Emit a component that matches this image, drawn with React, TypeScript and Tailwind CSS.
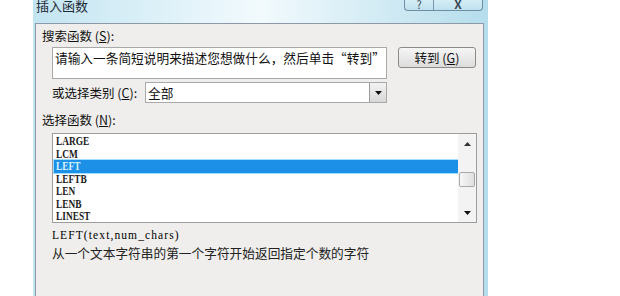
const items = ['LARGE', 'LCM', 'LEFT', 'LEFTB', 'LEN', 'LENB', 'LINEST']

function DownTri({ className = '' }: { className?: string }) {
    return (
        <svg width="7" height="4" viewBox="0 0 7 4" className={className}>
            <path d="M0 0 L7 0 L3.5 4 Z" fill="#111" />
        </svg>
    )
}

function UpTri() {
    return (
        <svg width="7" height="4" viewBox="0 0 7 4">
            <path d="M0 4 L7 4 L3.5 0 Z" fill="#333" />
        </svg>
    )
}

export default function App() {
    const cjk = { fontFamily: '"Noto Sans CJK SC", "Noto Sans", sans-serif' }
    const serif = { fontFamily: '"Liberation Serif", "DejaVu Serif", serif' }

    return (
        <div className="w-[620px] h-[296px] bg-white flex overflow-hidden" style={cjk}>
            <div className="ml-[33px] w-[455px] h-[296px] flex flex-col bg-linear-to-r from-[#c3e5f2] via-[#f2fafd] to-[#b5ddec] pl-[2px] pr-[4px]">
                {/* title bar */}
                <div className="h-[23px] flex items-start justify-between">
                    <span className="text-[13px] leading-[13px] mt-[-1px] ml-[1px] text-[#1e2a33]">插入函数</span>
                    <div className="flex h-[12px] mt-[-1px] mr-[1px] border border-t-0 border-[#6f8ea3] rounded-b-[4px] bg-linear-to-b from-[#d6eef8] to-[#bfe1ee] overflow-hidden">
                        <div className="w-[29px] flex justify-center items-end text-[11px] leading-[11px] text-[#3a4a55] border-r border-[#7c97aa]">?</div>
                        <div className="w-[48px] flex justify-center items-end text-[12px] leading-[12px] font-bold text-[#3a4a55]">X</div>
                    </div>
                </div>

                {/* body */}
                <div className="flex-1 bg-[#efeeec] border border-b-0 border-[#8b9aa6] px-[6px] pt-[5px] text-[#111]">
                    <div className="h-[14px] leading-[14px] text-[12.5px]">搜索函数 (<span className="underline">S</span>):</div>

                    <div className="flex mt-[4px] ml-[10px]">
                        <div className="w-[335px] h-[32px] bg-white border border-[#a9a9a9] pl-[2px] pt-[2px] text-[12.7px] leading-[16px] whitespace-nowrap overflow-hidden">
                            请输入一条简短说明来描述您想做什么，然后单击“转到”
                        </div>
                        <button className="ml-[11px] w-[78px] h-[21px] rounded-[3px] border border-[#8a8a8a] bg-linear-to-b from-[#f6f6f6] to-[#dcdcdc] text-[12.5px] leading-[19px] text-[#111]">
                            转到 (<span className="underline">G</span>)
                        </button>
                    </div>

                    <div className="flex items-center mt-[3px] ml-[10px] h-[21px]">
                        <span className="w-[93px] text-[12.5px] leading-[14px]">或选择类别 (<span className="underline">C</span>):</span>
                        <div className="w-[242px] h-[21px] bg-white border border-[#a9a9a9] flex items-center">
                            <span className="flex-1 pl-[2px] text-[12.7px] leading-[14px]">全部</span>
                            <div className="w-[17px] h-[19px] border-l border-[#9a9a9a] bg-linear-to-b from-[#f3f3f3] to-[#d8d8d8] flex items-center justify-center">
                                <DownTri />
                            </div>
                        </div>
                    </div>

                    <div className="h-[14px] leading-[14px] text-[12.5px] mt-[10px]">选择函数 (<span className="underline">N</span>):</div>

                    <div className="ml-[10px] mt-[6px] w-[425px] h-[90px] bg-white border border-[#9c9c9c] flex">
                        <div className="flex-1 pt-[1px] pl-[1px]">
                            {items.map((it) => (
                                <div
                                    key={it}
                                    className={
                                        it === 'LEFT'
                                            ? 'h-[12.5px] pl-[2px] bg-[#1c8fe6] text-[#d8f4ff] outline outline-[#9fdcff]'
                                            : 'h-[12.5px] pl-[2px] text-[#1a1a1a]'
                                    }
                                >
                                    <span className="block h-[12.5px] leading-[13px] text-[12px] font-bold origin-left scale-x-[0.78]" style={serif}>
                                        {it}
                                    </span>
                                </div>
                            ))}
                        </div>
                        <div className="w-[18px] bg-[#f3f3f3] flex flex-col items-center pt-[8px]">
                            <UpTri />
                            <div className="mt-[26px] w-[16px] h-[15px] rounded-[2px] border border-[#a8a8a8] bg-linear-to-r from-[#f7f7f7] to-[#dedede]" />
                            <div className="mt-[24px]">
                                <DownTri />
                            </div>
                        </div>
                    </div>

                    <div className="ml-[10px] mt-[6px] h-[12px] leading-[12px] text-[11.5px] tracking-[1.1px] text-[#000]" style={serif}>
                        LEFT(text,num_chars)
                    </div>
                    <div className="ml-[10px] mt-[4px] h-[15px] leading-[15px] text-[12.7px] text-[#222]">
                        从一个文本字符串的第一个字符开始返回指定个数的字符
                    </div>
                </div>
            </div>
        </div>
    )
}
